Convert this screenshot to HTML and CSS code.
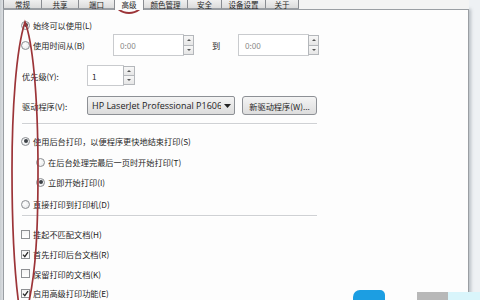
FILE: index.html
```html
<!DOCTYPE html>
<html lang="zh-CN">
<head>
<meta charset="utf-8">
<title>打印机属性 - 高级</title>
<link rel="stylesheet" href="styles.css">
</head>
<body>
<div class="frame">
  <div class="tabs">
    <div class="tab w1">常规</div>
    <div class="tab w2">共享</div>
    <div class="tab w3">端口</div>
    <div class="tab active w4">高级</div>
    <div class="tab w5">颜色管理</div>
    <div class="tab w6">安全</div>
    <div class="tab w7">设备设置</div>
    <div class="tab w8">关于</div>
  </div>
  <div class="panel">
    <div class="row r1"><span class="radio checked"></span><span class="lbl">始终可以使用(L)</span></div>
    <div class="row r2">
      <span class="radio"></span><span class="lbl wide">使用时间从(B)</span>
      <div class="spin time"><div class="field muted">0:00</div><div class="arrows"><span class="arr up"></span><span class="arr down"></span></div></div>
      <span class="to">到</span>
      <div class="spin time"><div class="field muted">0:00</div><div class="arrows"><span class="arr up"></span><span class="arr down"></span></div></div>
    </div>
    <div class="row r3">
      <span class="flabel">优先级(Y):</span>
      <div class="spin prio"><div class="field">1</div><div class="arrows"><span class="arr up"></span><span class="arr down"></span></div></div>
    </div>
    <div class="row r4">
      <span class="flabel">驱动程序(V):</span>
      <div class="select"><span class="sel-text">HP LaserJet Professional P1606dn</span><span class="sel-arrow"><svg width="7" height="4" viewBox="0 0 7 4"><path d="M0 0H7L3.5 4Z" fill="#222"/></svg></span></div>
      <div class="button">新驱动程序(W)...</div>
    </div>
    <div class="sep s1"></div>
    <div class="row r5"><span class="radio checked"></span><span class="lbl">使用后台打印，以便程序更快地结束打印(S)</span></div>
    <div class="row r6 sub"><span class="radio"></span><span class="lbl">在后台处理完最后一页时开始打印(T)</span></div>
    <div class="row r7 sub"><span class="radio checked"></span><span class="lbl">立即开始打印(I)</span></div>
    <div class="row r8"><span class="radio"></span><span class="lbl">直接打印到打印机(D)</span></div>
    <div class="sep s2"></div>
    <div class="row r9"><span class="check"></span><span class="lbl">挂起不匹配文档(H)</span></div>
    <div class="row r10"><span class="check on"><svg width="7" height="7" viewBox="0 0 7 7"><path d="M1 3.6L2.8 5.6L6 1.2" fill="none" stroke="#2a2a2a" stroke-width="1.3"/></svg></span><span class="lbl">首先打印后台文档(R)</span></div>
    <div class="row r11"><span class="check"></span><span class="lbl">保留打印的文档(K)</span></div>
    <div class="row r12"><span class="check on"><svg width="7" height="7" viewBox="0 0 7 7"><path d="M1 3.6L2.8 5.6L6 1.2" fill="none" stroke="#2a2a2a" stroke-width="1.3"/></svg></span><span class="lbl">启用高级打印功能(E)</span></div>
  </div>
</div>
<svg class="marks" width="480" height="300" viewBox="0 0 480 300">
  <ellipse cx="129" cy="2" rx="14" ry="11" fill="none" stroke="#9c3438" stroke-width="1.8"/>
  <path d="M19 306C14 270 12 220 12 170C12 110 16 50 25 22C32 40 38 90 38 170C38 230 36 272 28 306" fill="none" stroke="#9c3438" stroke-width="1.7"/>
</svg>
<div class="wm wm-blue"></div>
<div class="wm wm-grey"></div>
<div class="wm wm-cyan"></div>
</body>
</html>
```

FILE: styles.css
```css
* { box-sizing: border-box; margin: 0; padding: 0; }
html, body { width: 480px; height: 300px; overflow: hidden; }
body {
  position: relative;
  background: #eef1f4;
  font-family: "Noto Sans CJK SC", "Noto Sans", sans-serif;
  font-size: 8.2px;
  color: #1f1f1f;
}
.frame {
  display: flex;
  flex-direction: column;
  height: 300px;
  padding: 0 11px 0 3px;
  background: linear-gradient(to right, #c9cdd1 0, #dfe2e5 3px, #eef1f4 3px);
}
.tabs {
  display: flex;
  height: 9px;
  align-items: flex-start;
  background: #f3f3f3;
  position: relative;
  z-index: 1;
}
.tab {
  height: 9px;
  font-size: 7.5px;
  line-height: 9px;
  text-align: center;
  background: linear-gradient(#f0f0f0, #dcdcdc);
  border-right: 1px solid #8a8d92;
  border-bottom: 1px solid #9a9ea3;
  white-space: nowrap;
}
.tab.active {
  height: 10px;
  background: #fbfbfb;
  border-bottom: none;
  border-left: 1px solid #8a8d92;
}
.w1 { width: 39px; border-left: 1px solid #8a8d92; }
.w2 { width: 37px; }
.w3 { width: 36px; }
.w4 { width: 30px; margin-left: -1px; }
.w5 { width: 44px; }
.w6 { width: 34px; }
.w7 { width: 44px; }
.w8 { width: 33px; }

.panel {
  flex: 1;
  background: #fdfdfd;
  border: 1px solid #9a9ea3;
  border-bottom: none;
  padding-left: 17px;
  display: flex;
  flex-direction: column;
  box-shadow: 2px 0 3px rgba(90, 100, 112, 0.35);
}
.row { display: flex; align-items: center; height: 20px; white-space: nowrap; }
.r1 { margin-top: 6px; height: 18px; }
.r2 { height: 22px; }
.r3 { margin-top: 9px; height: 21px; padding-left: 1px; }
.r4 { margin-top: 10px; height: 19px; padding-left: 1px; }
.r5 { margin-top: 6px; }
.r6 { margin-top: 1px; }
.r8 { margin-top: 2px; }
.r9 { margin-top: 7px; }
.r11 { height: 19px; }
.sub { padding-left: 15px; }

.sep {
  height: 2px;
  width: 295px;
  margin-left: 1px;
  border-top: 1px solid #cfd1d4;
  border-bottom: 1px solid #ffffff;
}
.s1 { margin-top: 8px; }
.s2 { margin-top: 1px; }

.lbl { margin-left: 3px; }
.lbl.wide { width: 80px; }
.flabel { width: 65px; }

.radio {
  width: 9px; height: 9px; flex: none;
  border: 1px solid #8b8e92;
  border-radius: 50%;
  background: radial-gradient(circle at 40% 40%, #ffffff, #e2e4e6);
  position: relative;
}
.radio.checked::after {
  content: "";
  position: absolute;
  left: 1.5px; top: 1.5px;
  width: 4px; height: 4px;
  border-radius: 50%;
  background: #3d4247;
}
.check {
  width: 9px; height: 9px; flex: none;
  border: 1px solid #8e9093;
  background: linear-gradient(#f3f3f3, #ffffff);
  display: flex; align-items: center; justify-content: center;
}

.spin { display: flex; height: 100%; }
.time { width: 81px; }
.prio { width: 48px; }
.field {
  flex: 1;
  border: 1px solid #c9cbce;
  background: #fff;
  display: flex; align-items: center;
  padding-left: 6px;
  color: #1e1e1e;
}
.field.muted { color: #8a8a8a; }
.prio .field { padding-left: 4px; }
.arrows {
  width: 11px;
  margin-left: -1px;
  display: flex; flex-direction: column;
  padding: 1px 0;
}
.prio .arrows { width: 12px; }
.arr {
  flex: 1;
  border: 1px solid #b4b7bb;
  background: linear-gradient(#f7f7f7, #e6e6e6);
  position: relative;
}
.arr + .arr { margin-top: -1px; }
.arr::after {
  content: "";
  position: absolute;
  left: 50%; top: 50%;
  margin-left: -2px; margin-top: -1px;
  border-left: 2px solid transparent;
  border-right: 2px solid transparent;
}
.up::after { border-bottom: 2px solid #555; }
.down::after { border-top: 2px solid #555; }
.to { margin-left: 18px; width: 26px; }

.select {
  width: 148px; height: 100%;
  border: 1px solid #8d9095;
  border-radius: 2px;
  background: linear-gradient(#f4f4f4, #dcdcdc);
  display: flex; align-items: center;
  padding-left: 4px;
  overflow: hidden;
}
.sel-text { flex: 1; overflow: hidden; color: #1c1c1c; font-family: "Open Sans", "Noto Sans", sans-serif; font-size: 9px; }
.sel-arrow { width: 13px; display: flex; justify-content: center; align-items: center; }
.button {
  margin-left: 7px;
  width: 75px; height: 100%;
  border: 1px solid #8d9095;
  border-radius: 3px;
  background: linear-gradient(#f4f4f4, #dddddd);
  display: flex; align-items: center; justify-content: center;
}

.marks { position: absolute; left: 0; top: 0; pointer-events: none; }
.wm { position: absolute; }
.wm-blue { left: 353px; top: 290px; width: 32px; height: 12px; background: #1c9ee2; border-radius: 7px 5px 0 0; }
.wm-grey { left: 417px; top: 292px; width: 31px; height: 8px; background: #b8b8b8; }
.wm-cyan { left: 448px; top: 292px; width: 32px; height: 8px; background: #d9f5fb; }
```
